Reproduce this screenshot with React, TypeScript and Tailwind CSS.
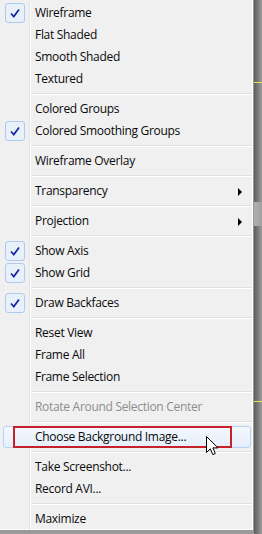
import React from "react";

type Entry =
  | { kind: "item"; label: string; checked?: boolean; submenu?: boolean; disabled?: boolean; hot?: boolean }
  | { kind: "sep" };

const entries: Entry[] = [
  { kind: "item", label: "Wireframe", checked: true },
  { kind: "item", label: "Flat Shaded" },
  { kind: "item", label: "Smooth Shaded" },
  { kind: "item", label: "Textured" },
  { kind: "sep" },
  { kind: "item", label: "Colored Groups" },
  { kind: "item", label: "Colored Smoothing Groups", checked: true },
  { kind: "sep" },
  { kind: "item", label: "Wireframe Overlay" },
  { kind: "sep" },
  { kind: "item", label: "Transparency", submenu: true },
  { kind: "sep" },
  { kind: "item", label: "Projection", submenu: true },
  { kind: "sep" },
  { kind: "item", label: "Show Axis", checked: true },
  { kind: "item", label: "Show Grid", checked: true },
  { kind: "sep" },
  { kind: "item", label: "Draw Backfaces", checked: true },
  { kind: "sep" },
  { kind: "item", label: "Reset View" },
  { kind: "item", label: "Frame All" },
  { kind: "item", label: "Frame Selection" },
  { kind: "sep" },
  { kind: "item", label: "Rotate Around Selection Center", disabled: true },
  { kind: "sep" },
  { kind: "item", label: "Choose Background Image...", hot: true },
  { kind: "sep" },
  { kind: "item", label: "Take Screenshot..." },
  { kind: "item", label: "Record AVI..." },
  { kind: "sep" },
  { kind: "item", label: "Maximize" },
];

function CheckBox() {
  return (
    <div className="w-[20px] h-[20px] rounded-[3px] border border-[#aecbef] bg-[#e8f0fa] flex items-center justify-center">
      <svg width="12" height="12" viewBox="0 0 12 12">
        <path d="M2 6.5 L4.8 9.5 L10 2.5" fill="none" stroke="#1b2a9e" strokeWidth="1.8" strokeLinejoin="miter" />
      </svg>
    </div>
  );
}

function Cursor() {
  return (
    <svg width="13" height="21" viewBox="0 0 13 21" className="absolute left-[206px] top-[10px]">
      <path
        d="M0.5 0.5 L0.5 16.5 L4.3 12.8 L6.8 18.6 L9.3 17.5 L6.9 11.9 L12 11.9 Z"
        fill="#ffffff"
        stroke="#000000"
        strokeWidth="1"
        strokeLinejoin="round"
      />
    </svg>
  );
}

function Row({ e }: { e: Extract<Entry, { kind: "item" }> }) {
  return (
    <div className="relative h-[22px] flex items-center">
      {e.hot && (
        <div className="absolute left-[3px] right-[1px] top-[0px] bottom-[0px] rounded-[3px] border border-[#b6d3f3] bg-gradient-to-b from-[#f3f8fd] to-[#e6effa]" />
      )}
      <div className="relative w-[29px] h-full flex items-center justify-center pl-[1px]">
        {e.checked && <CheckBox />}
      </div>
      <div className="w-px h-full bg-[#e2e3e3]" />
      <div className="w-px h-full bg-white" />
      <span
        className={`relative pl-[4px] text-[12px] leading-none tracking-[-0.3px] ${e.disabled ? "text-[#8d8d8d]" : "text-[#0a0a0a]"}`}
      >
        {e.label}
      </span>
      {e.submenu && (
        <div className="absolute right-[10px] top-[8px] w-0 h-0 border-y-[4px] border-y-transparent border-l-[4px] border-l-black" />
      )}
      {e.hot && (
        <>
          <div className="absolute left-[13px] w-[219px] top-[0px] h-[22px] border-2 border-[#c4212b]" />
          <Cursor />
        </>
      )}
    </div>
  );
}

function Separator() {
  return (
    <div className="h-[8px] flex">
      <div className="w-[29px]" />
      <div className="w-px bg-[#e2e3e3]" />
      <div className="w-px bg-white" />
      <div className="flex-1 flex flex-col pt-[3px] pl-[1px]">
        <div className="h-px bg-[#e0e0e0]" />
        <div className="h-px bg-white" />
      </div>
    </div>
  );
}

export default function App() {
  return (
    <div className="w-[262px] h-[534px] flex bg-[#9a9a9a] overflow-hidden" style={{ fontFamily: '"Open Sans", "Noto Sans", sans-serif' }}>
      <div className="w-[254px] h-[531px] bg-[#f0f0f0] border-r border-b border-[#979797] flex">
        <div className="flex-1 pt-[2px] border-r border-b border-white">
          {entries.map((e, i) => (e.kind === "sep" ? <Separator key={i} /> : <Row key={i} e={e} />))}
        </div>
      </div>
      <div className="flex-1 flex flex-col bg-gradient-to-r from-[#5e5e5e] to-[#9c9c9c]">
        <div className="h-[82px]" />
        <div className="h-px bg-[#e6e24a]" />
        <div className="h-[119px]" />
        <div className="h-[24px] bg-gradient-to-r from-[#b0b0b0] to-[#a0a0a0]" />
        <div className="h-[175px]" />
        <div className="h-px bg-[#e6e24a]" />
      </div>
    </div>
  );
}
